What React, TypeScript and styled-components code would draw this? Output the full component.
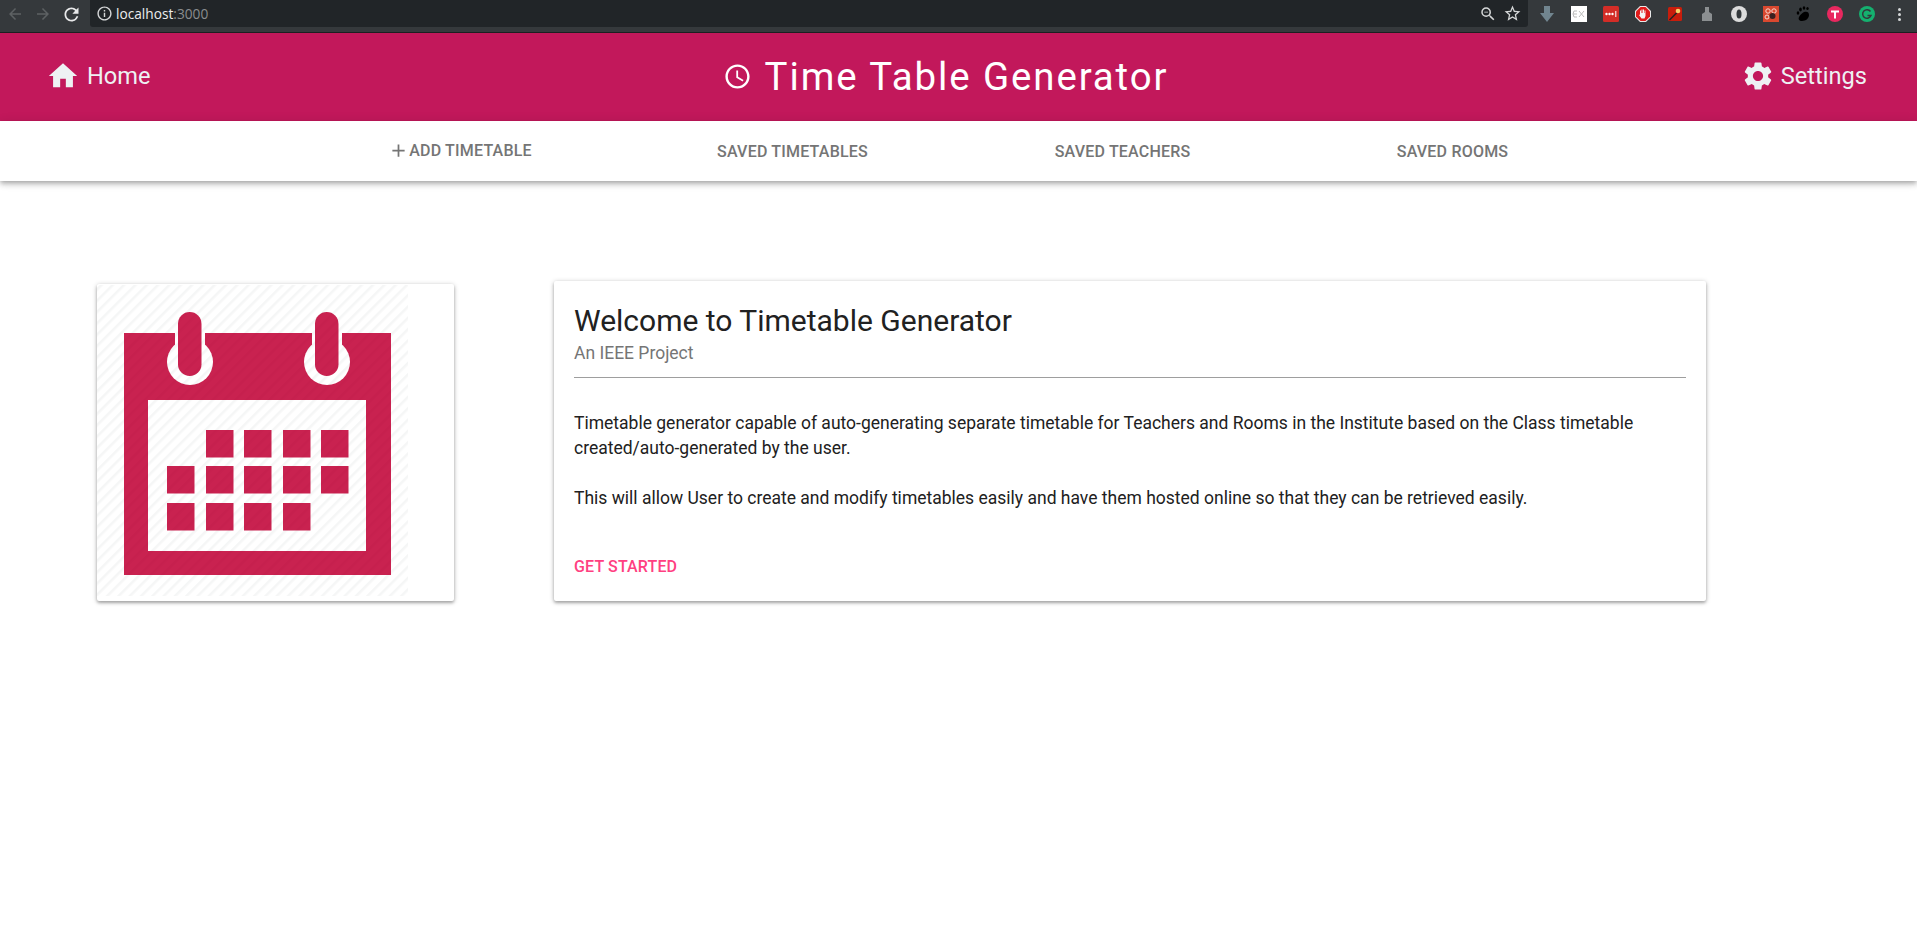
import React from "react";
import styled, { createGlobalStyle } from "styled-components";
import {
  MdAccessTime,
  MdAdd,
  MdArrowBack,
  MdArrowForward,
  MdHome,
  MdInfoOutline,
  MdRefresh,
  MdSettings,
  MdStarBorder,
  MdZoomOut,
} from "react-icons/md";

const GlobalStyle = createGlobalStyle`
  html, body {
    margin: 0;
    background: #fff;
    font-family: Roboto, "Liberation Sans", sans-serif;
  }
  #root {
    min-height: 100vh;
  }
`;

const tabs = ["Saved Timetables", "Saved Teachers", "Saved Rooms"];

const dayCells = [
  [206, 430], [244, 430], [283, 430], [321, 430],
  [167, 466], [206, 466], [244, 466], [283, 466], [321, 466],
  [167, 503], [206, 503], [244, 503], [283, 503],
];

function Extensions() {
  return (
    <ExtensionRow>
      <ExtIcon viewBox="0 0 16 16">
        <path d="M5 0h6v7h4l-7 9-7-9h4z" fill="#71858f" />
      </ExtIcon>
      <ExtIcon viewBox="0 0 16 16">
        <rect width="16" height="16" fill="#fff" />
        <path d="M2 8h4M6 5H3L2 8l1 3h3M8 5l5 6M13 5l-5 6" stroke="#bbb" strokeWidth="1" fill="none" />
      </ExtIcon>
      <ExtIcon viewBox="0 0 16 16">
        <rect width="16" height="16" rx="1.5" fill="#d32d27" />
        <circle cx="3.5" cy="8" r="1.2" fill="#fff" />
        <circle cx="6.5" cy="8" r="1.2" fill="#fff" />
        <circle cx="9.5" cy="8" r="1.2" fill="#fff" />
        <rect x="12.3" y="5" width="1" height="6" fill="#fff" />
      </ExtIcon>
      <ExtIcon viewBox="0 0 16 16">
        <path d="M5 0h6l5 5v6l-5 5H5l-5-5V5z" fill="#e8e8e8" />
        <path d="M5.5 1h5L15 5.5v5L10.500 15h-5L1 10.500v-5z" fill="#e01b1b" />
        <path d="M5 8V4.500h1V7h.5V3.500h1V7H8V3.500h1V7h.5V4.500h1V10l-1 2.500H6.500L4 9l1-.5z" fill="#f4f4f4" />
      </ExtIcon>
      <ExtIcon viewBox="0 0 16 16">
        <rect x="1" y="1" width="14" height="14" rx="1.500" fill="#c81d0c" />
        <path d="M2.500 14L10 6.500" stroke="#222" strokeWidth="1.500" />
        <circle cx="11" cy="5" r="2.300" fill="#f7d26a" />
      </ExtIcon>
      <ExtIcon viewBox="0 0 16 16">
        <path d="M6 1h4v5l3 2v7H3V8l3-2z" fill="#8b8f91" />
      </ExtIcon>
      <ExtIcon viewBox="0 0 16 16">
        <circle cx="8" cy="8" r="8" fill="#dcdcdc" />
        <ellipse cx="8" cy="8" rx="2.500" ry="4.500" fill="#33383b" />
      </ExtIcon>
      <ExtIcon viewBox="0 0 16 16">
        <rect width="16" height="16" fill="#d9482f" />
        <circle cx="5" cy="5" r="2.200" fill="none" stroke="#f6d8d0" />
        <circle cx="11" cy="5" r="2.200" fill="none" stroke="#f6d8d0" />
        <circle cx="4" cy="11" r="2" fill="none" stroke="#f6d8d0" />
        <circle cx="9.500" cy="10" r="3" fill="#3a2020" />
      </ExtIcon>
      <ExtIcon viewBox="0 0 16 16">
        <path d="M9 6c3-1 5 0 5 3s-3 6-7 6c-3 0-4-2-3-4s3-4 5-5z" fill="#000" />
        <ellipse cx="3" cy="7" rx="1.300" ry="1.800" fill="#000" />
        <ellipse cx="5.500" cy="3.500" rx="1.300" ry="1.900" fill="#000" />
        <ellipse cx="9" cy="2" rx="1.300" ry="1.800" fill="#000" />
        <ellipse cx="12.500" cy="2.500" rx="1.200" ry="1.500" fill="#000" />
      </ExtIcon>
      <ExtIcon viewBox="0 0 16 16">
        <circle cx="8" cy="8" r="8" fill="#e8285f" />
        <path d="M4 4.500h8v2H9v6H7v-6H4z" fill="#fff" />
      </ExtIcon>
      <ExtIcon viewBox="0 0 16 16">
        <circle cx="8" cy="8" r="8" fill="#15b06f" />
        <path d="M11.500 5.500A4.300 4.300 0 1 0 12 9.500H8.500" stroke="#33383b" strokeWidth="1.500" fill="none" />
      </ExtIcon>
      <MenuDots>
        <i />
        <i />
        <i />
      </MenuDots>
    </ExtensionRow>
  );
}

function CalendarImage() {
  return (
    <CalendarSvg viewBox="97 285 311 311">
      <defs>
        <pattern id="paper" width="8" height="8" patternUnits="userSpaceOnUse" patternTransform="rotate(-45)">
          <rect width="8" height="8" fill="#fff" />
          <rect width="8" height="2.500" fill="#f5f6f6" />
        </pattern>
        <pattern id="ink" width="8" height="8" patternUnits="userSpaceOnUse" patternTransform="rotate(-45)">
          <rect width="8" height="8" fill="#c92250" />
          <rect width="8" height="2.500" fill="#c6204e" />
        </pattern>
      </defs>
      <rect x="97" y="285" width="311" height="311" fill="url(#paper)" />
      <rect x="124" y="333" width="267" height="242" fill="url(#ink)" />
      <rect x="148" y="400" width="218" height="151" fill="url(#paper)" />
      {[190, 327].map((cx) => (
        <g key={cx}>
          <rect x={cx - 15} y="333" width="30" height="29" fill="url(#paper)" />
          <circle cx={cx} cy="362" r="23" fill="url(#paper)" />
          <rect x={cx - 12} y="312" width="23.500" height="64" rx="11.700" fill="url(#ink)" />
        </g>
      ))}
      {dayCells.map(([x, y]) => (
        <rect key={`${x}-${y}`} x={x} y={y} width="27.500" height="27.500" fill="url(#ink)" />
      ))}
    </CalendarSvg>
  );
}

export default function App() {
  return (
    <>
      <GlobalStyle />
      <BrowserBar>
        <NavIcon $dim>
          <MdArrowBack size={18} />
        </NavIcon>
        <NavIcon $dim>
          <MdArrowForward size={18} />
        </NavIcon>
        <NavIcon>
          <MdRefresh size={21} />
        </NavIcon>
        <Omnibox>
          <MdInfoOutline size={17} color="#d5d7d8" />
          <Url>
            localhost<span>:3000</span>
          </Url>
          <OmniboxActions>
            <MdZoomOut size={18} />
            <MdStarBorder size={19} />
          </OmniboxActions>
        </Omnibox>
        <Extensions />
      </BrowserBar>

      <Header>
        <HeaderLink>
          <MdHome size={34} />
          Home
        </HeaderLink>
        <Title>
          <MdAccessTime size={29} />
          Time Table Generator
        </Title>
        <HeaderLink>
          <MdSettings size={34} />
          Settings
        </HeaderLink>
      </Header>

      <TabBar>
        <Tab $lifted>
          <MdAdd size={21} />
          Add Timetable
        </Tab>
        {tabs.map((t) => (
          <Tab key={t}>{t}</Tab>
        ))}
      </TabBar>

      <Main>
        <ImageCard>
          <CalendarImage />
        </ImageCard>
        <InfoCard>
          <CardTitle>Welcome to Timetable Generator</CardTitle>
          <CardSubtitle>An IEEE Project</CardSubtitle>
          <Divider />
          <Body>
            Timetable generator capable of auto-generating separate timetable for Teachers and Rooms in the Institute
            based on the Class timetable created/auto-generated by the user.
          </Body>
          <Body>
            This will allow User to create and modify timetables easily and have them hosted online so that they can be
            retrieved easily.
          </Body>
          <ActionLink>Get Started</ActionLink>
        </InfoCard>
      </Main>
    </>
  );
}

const BrowserBar = styled.div`
  height: 32px;
  background: #35393c;
  border-bottom: 1px solid #1c1f21;
  display: flex;
  align-items: flex-start;
  padding-left: 1px;
`;

const NavIcon = styled.div<{ $dim?: boolean }>`
  width: 28px;
  height: 28px;
  display: flex;
  align-items: center;
  justify-content: center;
  color: ${(p) => (p.$dim ? "#5d6163" : "#e8e9ea")};
`;

const Omnibox = styled.div`
  width: 1438px;
  height: 27px;
  margin-left: 5px;
  background: #212528;
  border-radius: 0 0 3px 3px;
  display: flex;
  align-items: center;
  padding: 0 6px 0 6px;
  box-sizing: border-box;
`;

const Url = styled.div`
  margin-left: 3px;
  font-family: "Open Sans", sans-serif;
  font-size: 13.700px;
  color: #eceded;
  span {
    color: #8a8d8f;
  }
`;

const OmniboxActions = styled.div`
  margin-left: auto;
  display: flex;
  align-items: center;
  gap: 6px;
  color: #d5d7d8;
`;

const ExtensionRow = styled.div`
  display: flex;
  align-items: center;
  gap: 16px;
  height: 28px;
  margin-left: 11px;
`;

const ExtIcon = styled.svg`
  width: 16px;
  height: 16px;
  flex: none;
`;

const MenuDots = styled.div`
  width: 16px;
  display: flex;
  flex-direction: column;
  align-items: center;
  gap: 2px;
  i {
    width: 3px;
    height: 3px;
    border-radius: 50%;
    background: #d5d7d8;
  }
`;

const Header = styled.header`
  height: 88px;
  background: #c2185b;
  display: flex;
  align-items: center;
  justify-content: space-between;
  padding: 0 50px 2px 46px;
  box-sizing: border-box;
  color: #eef1f3;
`;

const HeaderLink = styled.div`
  display: flex;
  align-items: center;
  gap: 7px;
  font-size: 23.600px;
  font-weight: 400;
  min-width: 150px;
  &:last-child {
    justify-content: flex-end;
    gap: 6px;
    min-width: 172px;
  }
`;

const Title = styled.h1`
  margin: 0;
  display: flex;
  align-items: center;
  gap: 13px;
  font-size: 38.400px;
  font-weight: 400;
  letter-spacing: 1.900px;
  color: #fff;
`;

const TabBar = styled.nav`
  height: 60px;
  background: #fff;
  box-shadow: 0 2px 4px -1px rgba(0, 0, 0, 0.2), 0 4px 5px 0 rgba(0, 0, 0, 0.14), 0 1px 10px 0 rgba(0, 0, 0, 0.12);
  display: flex;
  justify-content: center;
  position: relative;
`;

const Tab = styled.div<{ $lifted?: boolean }>`
  width: 330px;
  box-sizing: border-box;
  display: flex;
  align-items: center;
  justify-content: center;
  padding: ${(p) => (p.$lifted ? "0 7px 1px 0" : "1px 2px 0 0")};
  font-size: 16px;
  font-weight: 500;
  letter-spacing: 0.200px;
  text-transform: uppercase;
  color: #757575;
`;

const Main = styled.main`
  display: flex;
  align-items: flex-end;
  padding: 100px 0 0 97px;
`;

const ImageCard = styled.div`
  width: 357px;
  height: 317px;
  background: #fff;
  border-radius: 2px;
  box-shadow: 0 1px 5px rgba(0, 0, 0, 0.25), 0 2px 3px rgba(0, 0, 0, 0.22);
  padding: 1px 0 0 0;
  box-sizing: border-box;
`;

const CalendarSvg = styled.svg`
  display: block;
  width: 311px;
  height: 311px;
`;

const InfoCard = styled.section`
  width: 1152px;
  height: 320px;
  margin-left: 100px;
  box-sizing: border-box;
  padding: 22px 20px 0 20px;
  background: #fff;
  border-radius: 2px;
  box-shadow: 0 1px 5px rgba(0, 0, 0, 0.25), 0 2px 3px rgba(0, 0, 0, 0.22);
`;

const CardTitle = styled.h2`
  margin: 0;
  font-size: 30px;
  line-height: 36px;
  font-weight: 400;
  color: #212121;
`;

const CardSubtitle = styled.div`
  font-size: 17.500px;
  line-height: 24px;
  color: #757575;
  font-weight: 400;
  margin-top: 2px;
`;

const Divider = styled.hr`
  margin: 12px 0 33px;
  border: 0;
  height: 1px;
  background: #9e9e9e;
`;

const Body = styled.p`
  margin: 0 0 25px;
  font-size: 17.500px;
  line-height: 25px;
  color: #212121;
`;

const ActionLink = styled.div`
  margin-top: 46px;
  font-size: 16px;
  font-weight: 500;
  letter-spacing: 0.150px;
  text-transform: uppercase;
  color: #ff4081;
`;
